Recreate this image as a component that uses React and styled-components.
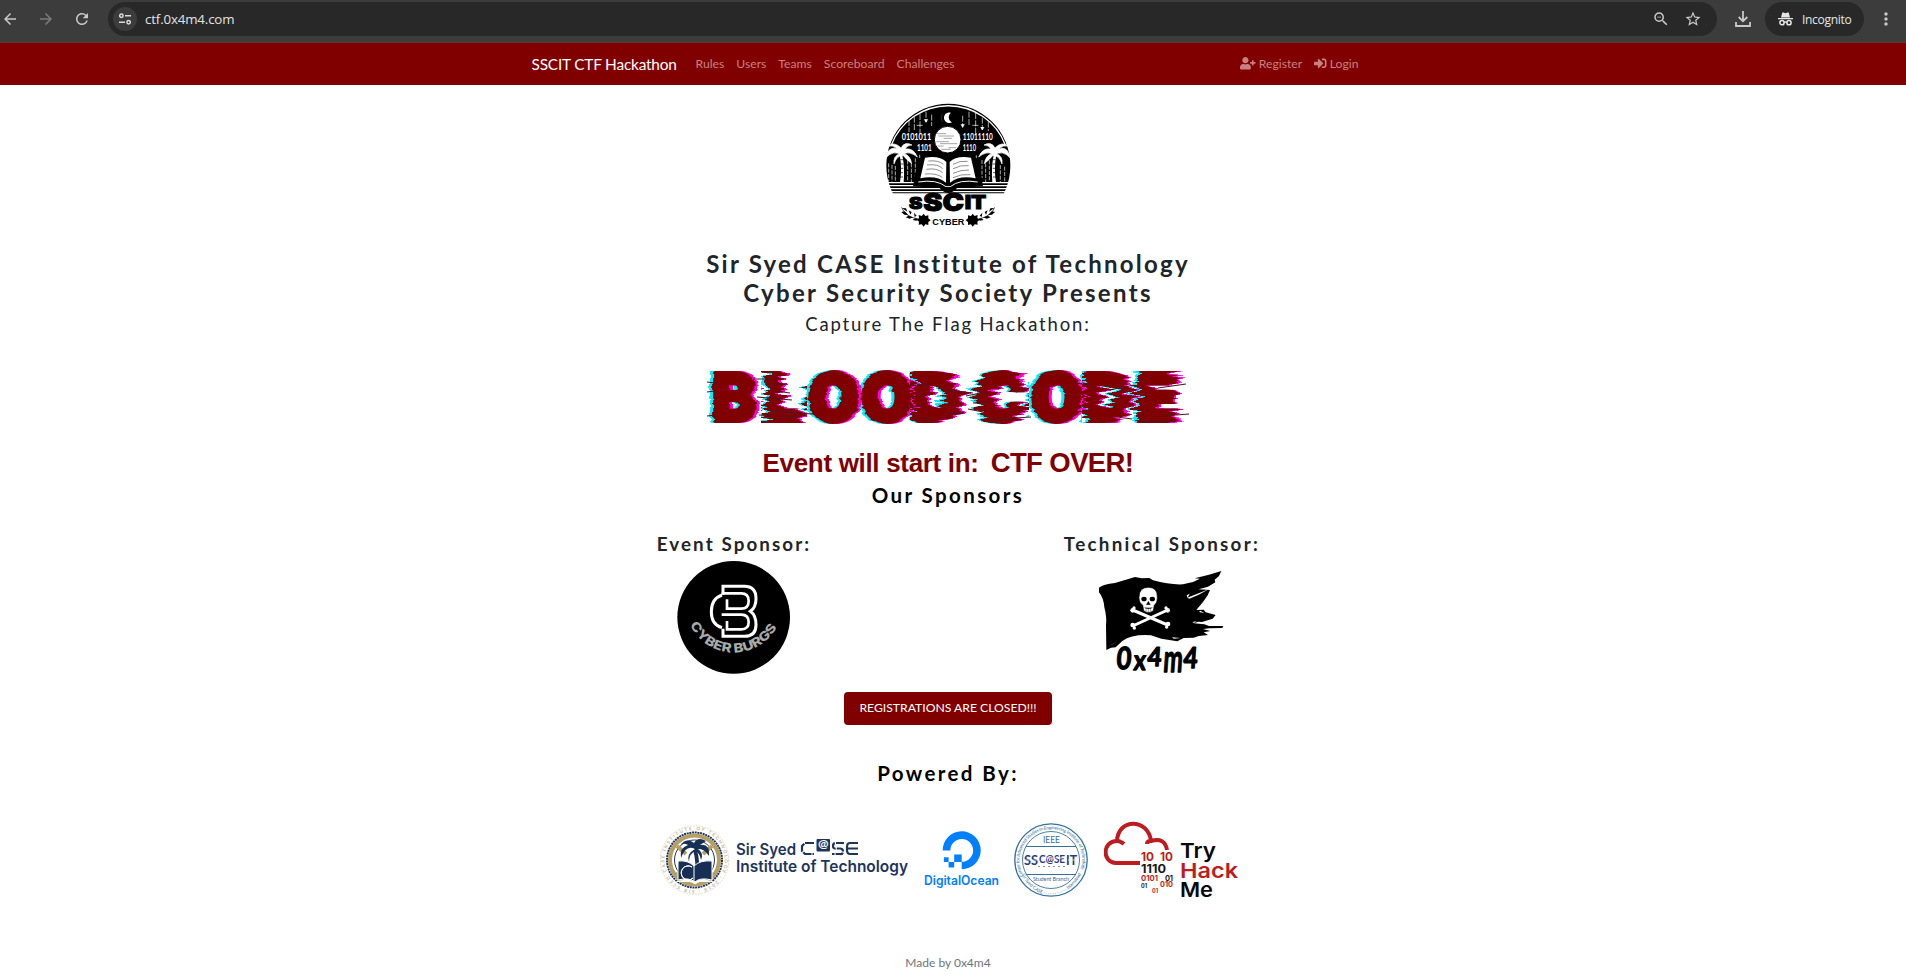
import React from 'react';
import styled, { createGlobalStyle } from 'styled-components';
import { FaUserPlus, FaSignInAlt } from 'react-icons/fa';
import { MdArrowBack, MdArrowForward, MdRefresh, MdStarBorder, MdMoreVert, MdZoomOut } from 'react-icons/md';

const GlobalStyle = createGlobalStyle`
  * { box-sizing: border-box; }
  body { margin: 0; background: #fff; font-family: Lato, "Liberation Sans", sans-serif; color: #212529; overflow: hidden; }
  svg { display: block; flex: none; }
`;

const Page = styled.div`
  height: 979px;
  display: flex;
  flex-direction: column;
`;

/* Browser toolbar */
const Toolbar = styled.div`
  height: 43px;
  flex: none;
  display: flex;
  align-items: flex-start;
  padding: 2px 10px 0 1px;
  background: #3c3c3c;
  border-bottom: 1px solid #62382f;
  color: #c9c9c9;
  font-family: "Open Sans", "Noto Sans", sans-serif;
`;
const ToolButton = styled.span`
  width: ${(p) => p.$w || 36}px;
  height: 34px;
  display: flex;
  align-items: center;
  justify-content: ${(p) => p.$align || 'flex-start'};
  padding-left: ${(p) => p.$pl || 0}px;
  color: ${(p) => (p.$dim ? '#7b7b7b' : '#c9c9c9')};
`;
const AddressBar = styled.div`
  flex: 1;
  height: 34px;
  border-radius: 17px;
  background: #282828;
  display: flex;
  align-items: center;
  padding: 0 15px 0 5px;
`;
const SiteInfo = styled.span`
  width: 24px;
  height: 24px;
  border-radius: 50%;
  background: #3c3c3c;
  display: flex;
  align-items: center;
  justify-content: center;
`;
const Url = styled.span`
  flex: 1;
  padding-left: 8px;
  font-size: 13.3px;
  line-height: 20px;
  color: #e3e3e3;
  letter-spacing: -0.15px;
`;
const AddressActions = styled.span`
  display: flex;
  gap: 14px;
`;
const Incognito = styled.div`
  width: 99px;
  height: 34px;
  border-radius: 17px;
  background: #282828;
  display: flex;
  align-items: center;
  padding-left: 13px;
  gap: 9px;
  font-size: 12px;
  letter-spacing: -0.3px;
  color: #e6e6e6;
`;

/* Site navigation */
const Navbar = styled.nav`
  height: 42px;
  flex: none;
  background: #800000;
  display: flex;
  justify-content: center;
`;
const NavInner = styled.div`
  width: 827px;
  margin-right: 16px;
  display: flex;
  align-items: center;
  padding-bottom: 1px;
`;
const Brand = styled.span`
  width: 164px;
  font-size: 15.4px;
  letter-spacing: -0.19px;
  white-space: nowrap;
  color: #fff;
`;
const NavGroup = styled.div`
  display: flex;
  gap: 12px;
  margin-left: ${(p) => (p.$end ? 'auto' : '0')};
`;
const NavLink = styled.span`
  display: flex;
  align-items: center;
  gap: 3px;
  font-size: 12.2px;
  line-height: 18px;
  color: #c98080;
`;
const UserPlusIcon = styled(FaUserPlus)`
  width: 15.5px;
  height: 12.5px;
`;

/* Main content */
const Main = styled.main`
  width: 1896px;
  display: flex;
  flex-direction: column;
  align-items: center;
  padding-top: 10px;
`;
const Heading = styled.h1`
  margin: ${(p) => p.$mt || 0}px 0 ${(p) => p.$mb || 0}px;
  font-family: Lato, sans-serif;
  font-size: ${(p) => p.$size}px;
  line-height: ${(p) => p.$lh}px;
  font-weight: ${(p) => p.$weight || 700};
  letter-spacing: ${(p) => p.$track}px;
  color: ${(p) => p.$color || '#212529'};
  white-space: nowrap;
`;
const Title = styled.div`
  margin-top: 25px;
`;
const Countdown = styled.div`
  display: flex;
  align-items: baseline;
  gap: 12px;
  margin-top: 9px;
  height: 37px;
  line-height: 37px;
  font-family: "Liberation Sans", Arial, sans-serif;
  font-weight: 700;
  font-size: 26px;
  letter-spacing: -0.32px;
  color: #800000;
`;
const CountdownValue = styled.span`
  font-size: 27.5px;
  letter-spacing: -0.6px;
`;
const Sponsors = styled.section`
  display: grid;
  grid-template-columns: 428px 428px;
  margin-top: 23px;
  height: 162px;
`;
const Sponsor = styled.div`
  display: flex;
  flex-direction: column;
  align-items: center;
`;
const ClosedButton = styled.button`
  width: 208px;
  height: 33px;
  flex: none;
  padding: 0 0 2px;
  border: 0;
  border-radius: 4px;
  background: #800000;
  color: #fff;
  font-family: Lato, sans-serif;
  font-size: 12.2px;
  white-space: nowrap;
`;
const Partners = styled.section`
  display: flex;
  gap: 16px;
  margin: 36px 0 0 2px;
  height: 80px;
`;
const Footer = styled.footer`
  margin-top: 53px;
  font-size: 12px;
  line-height: 18px;
  color: #6c757d;
`;

const TuneIcon = () => (
  <svg width="12" height="12" viewBox="0 0 12 12" fill="none" stroke="#dcdcdc" strokeWidth="1.5">
    <circle cx="2.4" cy="2.8" r="1.7" /><path d="M6 2.8h6M0 9.2h6" /><circle cx="9.6" cy="9.2" r="1.7" />
  </svg>
);
const DownloadIcon = () => (
  <svg width="16" height="16" viewBox="0 0 16 16" fill="none" stroke="#c9c9c9" strokeWidth="1.8">
    <path d="M8 0v10M3.7 6 8 10.3 12.3 6M1 11v4h14v-4" />
  </svg>
);
const IncognitoIcon = () => (
  <svg width="15" height="14" viewBox="0 0 15 14">
    <path d="M3 5.5 4.3.6h1.3l1.9.7L9.4.6h1.3L12 5.5zM0 6h15v1.3H0z" fill="#e6e6e6" />
    <g fill="none" stroke="#e6e6e6" strokeWidth="1.5"><circle cx="4" cy="10.7" r="2.1" /><circle cx="11" cy="10.7" r="2.1" /><path d="M6 10.4q1.5-.8 3 0" /></g>
  </svg>
);

const Palm = ({ flip }) => (
  <g transform={flip ? 'translate(474 0) scale(-1 1)' : undefined} fill="#fff">
    <path d="M92 180q8 40 1 82h11q4-42-4-82z" />
    <path d="M96 180Q74 164 51 188Q58 152 84 162Q72 149 55 153Q76 138 96 159Q107 138 129 150Q114 151 108 162Q134 158 145 186Q120 167 106 177Q124 181 128 206Q112 193 103 182Q84 180 75 207Q72 184 91 176Z" stroke="#fff" strokeWidth="2" />
    <path d="M94 194h9M94 207h9M94 220h9M93 233h9M93 246h9" stroke="#000" strokeWidth="2" />
  </g>
);
const SocietyLogo = () => (
  <svg width="156" height="140" viewBox="3 0 468 420">
    <defs><clipPath id="disc"><path d="M50 295V20h376v275z" /></clipPath></defs>
    <g clipPath="url(#disc)">
      <circle cx="238" cy="212" r="186" fill="#000" />
      <path d="M67 150A183 183 0 0 1 409 150" fill="none" stroke="#fff" strokeWidth="4" />
      <g stroke="#fff" strokeWidth="2" fill="none">
        <path d="M120 75v36M136 65v42M153 57v66M143 91h20M171 50v31M188 59v34M281 62v35M300 50v42M320 54v64M310 91h20M340 68v36M358 80v28" strokeDasharray="18 4" />
        <path d="M59 205v55M69 210v50M79 213v50M116 196v64M127 205v56M139 190v60M339 195v54M350 205v56M361 196v62M394 210v52M407 215v46M152 179v10M322 181v9" strokeDasharray="12 4" />
        <path d="m166 73 5 9 5-9M276 88l5 9 5-9M335 96l5 9 5-9" fill="#fff" />
      </g>
      <path d="M246 53a16 16 0 1 0 3 29a17 17 0 0 1-3-29" fill="#fff" />
      <path d="M220 56q-6 13 0 26" stroke="#777" fill="none" />
      <g fill="#fff" fontFamily="Lato, sans-serif" fontWeight="700" fontSize="28">
        <text x="98" y="136" textLength="89" lengthAdjust="spacingAndGlyphs">0101011</text>
        <text x="281" y="136" textLength="90" lengthAdjust="spacingAndGlyphs">11011110</text>
        <text x="144" y="168" textLength="44" lengthAdjust="spacingAndGlyphs">1101</text>
        <text x="281" y="168" textLength="40" lengthAdjust="spacingAndGlyphs">1110</text>
      </g>
      <circle cx="236" cy="134" r="40" fill="#fff" stroke="#000" strokeWidth="3" />
      <path d="M203 116h28M208 123h47M224 130h25M202 140h38M213 146h52M206 153h18M238 158h24M217 163h28" stroke="#777" strokeWidth="2" />
      <path d="M50 263h376M50 272h376M50 281h376M50 290h376" stroke="#fff" strokeWidth="4" />
      <Palm /><Palm flip />
      <path d="M147 190h15l8-8q45-6 67 14q23-20 68-14l8 8h14l15 84-84 5q-21 20-42 0l-84-5z" fill="#000" />
      <path d="M168 188q44-7 64 13l-1 62q-29-23-77-13zM306 188q-44-7-64 13l1 62q29-23 77-13z" fill="#fff" />
      <path d="M178 198q31-3 45 10M174 210q33-4 47 11M172 223q31-5 49 10M168 237q34-3 52 10M252 208q20-12 44-9M252 221q23-12 47-9M252 235q24-11 48-10M252 248q25-12 52-9" fill="none" stroke="#555" strokeWidth="2" />
      <path d="M148 261q55-9 83 14h13q27-23 82-14" stroke="#fff" strokeWidth="3" fill="none" />
      <path d="M210 277h56q-13 17-28 17t-28-17" fill="#000" />
    </g>
    <g fontFamily="Inter, sans-serif" fontWeight="900" fill="#000" stroke="#000" strokeWidth="3">
      <text x="120" y="342" fontSize="48" textLength="40" lengthAdjust="spacingAndGlyphs">S</text>
      <text x="163" y="348" fontSize="75" textLength="122" lengthAdjust="spacingAndGlyphs">SC</text>
      <text x="287" y="343" fontSize="57" textLength="65" lengthAdjust="spacingAndGlyphs">IT</text>
    </g>
    <text x="190" y="391" fontFamily="Liberation Sans" fontWeight="700" fontSize="28" textLength="96" lengthAdjust="spacingAndGlyphs">CYBER</text>
    {[false, true].map((f) => (
      <g key={String(f)} transform={f ? 'translate(475 0) scale(-1 1)' : undefined}>
        <path d="m164 356 5 7 9-2 0 9 7 6-7 5 0 9-9-2-5 7-6-7-9 1 1-9-6-5 6-6-1-9 9 3z" />
        <path d="M98 337q9 27 48 35" fill="none" stroke="#000" strokeWidth="2" />
        <path d="M99 339l12 1 4 10zM107 349l-10 2 9 8 12 1zM119 346l5 13 4-8zM119 362l-9 5 12 4 10-4zM135 353l2 13 6-4zM138 370l-7 5 11 2 8-5z" />
      </g>
    ))}
  </svg>
);

const TITLE_X = [14, 66, 110, 163, 214, 262, 277, 333, 385, 438];
const STREAKS = 'M55 18h24M67 23h22M78 30l14 2M59 36l35 3M74 50l40 3M61 54l40 2M210 25l22-2M250 29l25 3M212 36l15-2M205 48l20-5M250 53l16-2M218 58l18 1M268 35l19-4M275 42l15-1M270 48l15 3M289 59l44-3M318 31l13-4M378 22l14 2M412 29l24-5M380 51l10-2M419 56l15 2M460 27l28-4M465 55l26-2M440 61l36-1M9 21l8 1M9 31l8-1M9 55l9-1';
const TitleLayers = () => (
  <>
    <use href="#title" x="-3" fill="#00efff" stroke="#00efff" />
    <use href="#title" x="3" fill="#ff00dc" stroke="#ff00dc" />
    <use href="#title" fill="#800000" stroke="#800000" />
  </>
);
const Tear = ({ id, freq, scale, seed }) => (
  <filter id={id} x="-5%" y="-10%" width="110%" height="120%" colorInterpolationFilters="sRGB">
    <feTurbulence type="fractalNoise" baseFrequency={freq} numOctaves="2" seed={seed} result="n" />
    <feColorMatrix in="n" type="matrix" values="1 0 0 0 0  0 0 0 0 0.5  0 0 0 0 0.5  0 0 0 0 1" result="m" />
    <feDisplacementMap in="SourceGraphic" in2="m" scale={scale} xChannelSelector="R" yChannelSelector="G" />
  </filter>
);
const BloodCode = () => (
  <svg width="500" height="74" viewBox="0 0 500 74">
    <defs>
      <Tear id="tear" freq="0.025 0.26" scale="30" seed="5" />
      <Tear id="ripple" freq="0.03 0.25" scale="6" seed="3" />
      <clipPath id="tornLetters"><path d="M63 0h46v74H63zM212 0h119v74H212zM384 0h116v74H384z" /></clipPath>
      <clipPath id="calmLetters"><path d="M0 0h63v74H0zM109 0h103v74H109zM331 0h53v74h-53z" /></clipPath>
      <text id="title" x={TITLE_X.join(' ')} y="60" fontFamily="Inter, Lato, sans-serif" fontWeight="900" fontSize="66" strokeWidth="4" strokeLinejoin="round">BLOOD CODE</text>
    </defs>
    <g clipPath="url(#tornLetters)"><g filter="url(#tear)"><TitleLayers /></g></g>
    <g clipPath="url(#calmLetters)"><g filter="url(#ripple)"><TitleLayers /></g></g>
    <path d={STREAKS} stroke="#52151e" strokeWidth="1.1" />
  </svg>
);

const CyberBurgsLogo = () => (
  <svg width="114" height="114" viewBox="54 35 342 342">
    <defs><path id="burgsArc" d="M93 226A146 146 0 0 0 359 222" /></defs>
    <circle cx="224" cy="204" r="169" />
    <g fill="none" stroke="#fff" strokeWidth="9">
      <path d="M192 136V111H256Q291 111 291 148Q291 174 274 186Q291 198 291 226Q291 261 256 261H192V238" />
      <path d="M189 137Q157 148 157 187T189 235" />
      <path d="M204 150V178H247Q269 178 269 155T247 132H188M188 196H247Q269 196 269 218T247 240H204V215" strokeWidth="8" />
    </g>
    <text fill="#aaa" fontFamily="Inter, sans-serif" fontWeight="800" fontSize="38"><textPath href="#burgsArc" textLength="322" lengthAdjust="spacingAndGlyphs">CYBER BURGS</textPath></text>
  </svg>
);

const PirateLogo = () => (
  <svg width="160" height="125" viewBox="6 3 480 375">
    <path d="M57 83Q70 73 105 69L165 51L185 55L208 54L219 61Q269 75 309 73L339 66L360 56L344 55L387 44L424 33L417 48L404 59L406 67L384 80L356 88L390 90L383 106L369 126L357 140L349 150L371 149L377 157L407 165L398 176L366 186L354 185L342 190L373 193L387 198H430L427 204L389 205L369 207L391 213L371 217L384 225L356 228L341 233L311 234L292 244L244 236L213 226Q157 222 127 243L107 262L93 263L79 270L78 196Q81 172 73 142Q71 114 57 97Z" />
    <path d="M84 261l28-18-13 9zM320 106l9-5-6 12zM337 186l13-2-8 5M361 152l12 7-16-3M276 232l25 2-20 2M322 113l30-12 34-13-30 16-28 12z" fill="#fff" />
    <path d="m158 150 105 45M263 150 158 198" stroke="#fff" strokeWidth="9" />
    <g fill="#fff"><circle cx="158" cy="151" r="7" /><circle cx="162" cy="144" r="5" /><circle cx="263" cy="151" r="7" /><circle cx="258" cy="144" r="5" /><circle cx="158" cy="195" r="7" /><circle cx="163" cy="204" r="5" /><circle cx="264" cy="192" r="7" /><circle cx="260" cy="201" r="5" />
      <path d="M177 112Q177 82 205 82T232 112Q232 130 223 135L220 152Q205 163 191 152L188 135Q177 130 177 112" stroke="#000" strokeWidth="2" /></g>
    <ellipse cx="192" cy="117" rx="8" ry="7" /><ellipse cx="217" cy="117" rx="8" ry="7" /><path d="m205 124-6 10h12zM193 143q12 6 25 0M198 143v11M205 144v12M212 144v10" stroke="#000" />
    <g fontFamily="Lato, sans-serif" fontWeight="700" fill="#000" stroke="#000" strokeWidth="4" strokeLinejoin="round">
      <text transform="translate(108 326) skewX(-4)" fontSize="92" textLength="44" lengthAdjust="spacingAndGlyphs">0</text>
      <text transform="translate(160 329) skewX(-4)" fontSize="84" textLength="36" lengthAdjust="spacingAndGlyphs">x</text>
      <text transform="translate(201 318) skewX(-4)" fontSize="78" textLength="42" lengthAdjust="spacingAndGlyphs">4</text>
      <text transform="translate(248 336) skewX(-4)" fontSize="114" textLength="58" lengthAdjust="spacingAndGlyphs">m</text>
      <text transform="translate(309 324) skewX(-4)" fontSize="86" textLength="42" lengthAdjust="spacingAndGlyphs">4</text>
    </g>
  </svg>
);

const InstituteLogo = () => (
  <svg width="248" height="80" viewBox="0 0 248 80">
    <defs><path id="sealRing" d="M34.5 69a30 30 0 1 1 .1 0" /></defs>
    <circle cx="34.5" cy="39" r="34.2" fill="#fff" stroke="#d8ceb1" strokeWidth=".7" strokeDasharray="2 1" />
    <text fontFamily="Lato" fontWeight="700" fontSize="4.6" fill="#c2b58f"><textPath href="#sealRing" textLength="184">SIR SYED CASE INSTITUTE OF TECHNOLOGY · 2018 ·</textPath></text>
    <circle cx="34.5" cy="39" r="27.5" fill="#fff" stroke="#1f355b" strokeWidth="2" strokeDasharray="2 .7" />
    <circle cx="34.5" cy="39" r="24.5" fill="#fff" stroke="#b59f65" strokeWidth="4" />
    <circle cx="34.5" cy="39" r="20" fill="none" stroke="#1f355b" strokeWidth="1" />
    <path d="M17 25l9 8M52 25l-9 8M15 55l7-5M54 55l-7-5" stroke="#b59f65" strokeWidth="4" />
    <path d="M33 29q4 13 1 24h5q1-13-2-24z" fill="#172f55" />
    <path d="M35 28Q26 23 21 37Q19 27 28 24Q23 21 20 25Q26 16 34 22Q38 15 46 20L40 24Q50 22 49 35Q44 27 38 28Q44 32 41 39Q40 33 36 30Q29 32 29 41Q26 33 35 28" fill="#172f55" />
    <path d="M18 40q10-1 16 5 6-6 18-5v19q-12-3-17 2-6-5-17-2z" fill="#172f55" stroke="#fff" />
    <path d="M32 46a7 7 0 1 0 1 11 7 7 0 1 1-1-11M34 45v16M16 61q12-4 19 2 7-6 18-2" fill="#fff" stroke="#fff" />
    <g fill="#1d355b" fontFamily="Inter, sans-serif" fontWeight="600" fontSize="16">
      <text x="76" y="34" textLength="60" lengthAdjust="spacingAndGlyphs">Sir Syed</text>
      <text x="76" y="51" textLength="172" lengthAdjust="spacingAndGlyphs">Institute of Technology</text>
    </g>
    <g fill="none" stroke="#1d355b" strokeWidth="2.2">
      <path d="M154 22h-9l-3 3v5l3 3h9" strokeDasharray="9 1" />
      <path d="M184 22h-8q-3 0-3 3t3 2.500h4q3 0 3 3t-3 2.500h-8" strokeDasharray="8 1" />
      <path d="M198 22h-8q-3 0-3 4v3q0 4 3 4h8M188 27.500h10" />
    </g>
    <rect x="156.500" y="18" width="13.500" height="12.500" rx="1" fill="#1d355b" />
    <text x="158" y="27" fontFamily="Lato" fontWeight="700" fontSize="11.500" textLength="10.500" lengthAdjust="spacingAndGlyphs" fill="#fff">@</text>
  </svg>
);

const DigitalOceanLogo = () => (
  <svg width="75" height="80" viewBox="0 0 75 80" fill="#0080ff">
    <path d="M37.700 48.300v-7.500A11.400 11.400 0 1 0 26.300 29.600h-7.600A19 19 0 1 1 37.700 48.300" />
    <path d="M30.200 33.400h7.500v7.500h-7.500zM24.600 40.900h5.600v5.600h-5.600zM19.900 36.200h4.700v4.700h-4.700z" />
    <text x="0" y="63.800" fontFamily="Inter, sans-serif" fontWeight="600" fontSize="12.700" textLength="75" lengthAdjust="spacingAndGlyphs">DigitalOcean</text>
  </svg>
);

const SealFrame = styled.svg`
  margin-left: -1px;
`;
const BranchLogo = () => (
  <SealFrame width="74" height="80" viewBox="0 0 74 80" fill="none" stroke="#33709f">
    <defs><path id="branchTop" d="M9.500 55A31.500 31.500 0 1 1 64.500 55" /><path id="branchLow" d="M6 51Q18 74 37 74T69 50" /></defs>
    <circle cx="37" cy="39" r="36.200" strokeWidth="1.300" />
    <circle cx="37" cy="39" r="28.500" strokeWidth=".900" />
    <path d="M12 25.500h50M12 53.500h50" />
    <g stroke="none" fill="#33709f" fontFamily="Lato, sans-serif">
      <text fontSize="4.600"><textPath href="#branchTop" textLength="124">Center for Advanced Studies in Engineering Institute of Technology</textPath></text>
      <text fontSize="4.600"><textPath href="#branchLow" startOffset="3" textLength="76">Sir Syed CASE · · · · · · · · · · · Islamabad</textPath></text>
      <text x="29" y="22" fontSize="10" textLength="17" lengthAdjust="spacingAndGlyphs">IEEE</text>
      <text x="19" y="60" fontSize="5.500" textLength="36">Student Branch</text>
      <g fill="#263a79" fontWeight="700" fontSize="13">
        <text x="10" y="43.500" textLength="14" lengthAdjust="spacingAndGlyphs">SS</text>
        <text x="25" y="42" fontSize="11" textLength="26" lengthAdjust="spacingAndGlyphs">C@SE</text>
        <text x="52" y="43.500" textLength="11" lengthAdjust="spacingAndGlyphs">IT</text>
      </g>
    </g>
    <path d="M10 39h14M28 37h24M54 39h8" stroke="#fff" strokeWidth=".700" />
    <path d="M24 45.500h27" stroke="#555b91" strokeWidth=".700" strokeDasharray="2 3" />
  </SealFrame>
);

const TryHackMeLogo = () => (
  <svg width="134" height="80" viewBox="0 0 134 80">
    <path d="M36 42H12C-2 42-2 20 13 20C14-3 44-3 47 20Q61 16 63 29M13 20q3-.5 7 3M47 20q-4 0-4 3" fill="none" stroke="#bd1d20" strokeWidth="4" strokeLinejoin="round" />
    <g fontFamily="Inter, sans-serif" fontWeight="700" fill="#bd1d20" fontSize="12">
      <text x="37" y="40.300" textLength="13" lengthAdjust="spacingAndGlyphs">10</text><text x="56" y="40.300" textLength="13" lengthAdjust="spacingAndGlyphs">10</text>
      <text x="37" y="52" fill="#171717" textLength="25" lengthAdjust="spacingAndGlyphs">1110</text>
      <text x="37" y="60" fontSize="7.500" textLength="17" lengthAdjust="spacingAndGlyphs">0101</text>
      <text x="61" y="60" fontSize="7.500" fill="#171717" textLength="8">01</text>
      <text x="56" y="66" fontSize="7.500" textLength="13" lengthAdjust="spacingAndGlyphs">010</text>
      <text x="37" y="67" fontSize="5.500" fill="#171717">01</text><text x="48" y="72" fontSize="5.500">01</text>
    </g>
    <g fontFamily="Inter, sans-serif" fontWeight="600" fontSize="20.500" fill="#080808">
      <text x="76" y="37" textLength="36" lengthAdjust="spacingAndGlyphs">Try</text>
      <text x="76" y="56.500" fill="#bd1d20" textLength="58" lengthAdjust="spacingAndGlyphs">Hack</text>
      <text x="76" y="76" textLength="33" lengthAdjust="spacingAndGlyphs">Me</text>
    </g>
  </svg>
);

export default function App() {
  return (
    <Page>
      <GlobalStyle />
      <Toolbar>
        <ToolButton><MdArrowBack size={18} /></ToolButton>
        <ToolButton $dim><MdArrowForward size={18} /></ToolButton>
        <ToolButton $w={35}><MdRefresh size={18} /></ToolButton>
        <AddressBar>
          <SiteInfo><TuneIcon /></SiteInfo>
          <Url>ctf.0x4m4.com</Url>
          <AddressActions><MdZoomOut size={18} /><MdStarBorder size={18} /></AddressActions>
        </AddressBar>
        <ToolButton $w={48} $align="center" $pl={4}><DownloadIcon /></ToolButton>
        <Incognito><IncognitoIcon />Incognito</Incognito>
        <ToolButton $w={32} $align="flex-end"><MdMoreVert size={20} /></ToolButton>
      </Toolbar>
      <Navbar>
        <NavInner>
          <Brand>SSCIT CTF Hackathon</Brand>
          <NavGroup>
            {['Rules', 'Users', 'Teams', 'Scoreboard', 'Challenges'].map((t) => <NavLink key={t}>{t}</NavLink>)}
          </NavGroup>
          <NavGroup $end>
            <NavLink><UserPlusIcon />Register</NavLink>
            <NavLink><FaSignInAlt size={12.5} />Login</NavLink>
          </NavGroup>
        </NavInner>
      </Navbar>
      <Main>
        <SocietyLogo />
        <Heading $mt={14} $size={24} $lh={29} $track={2.25}>Sir Syed CASE Institute of Technology</Heading>
        <Heading $size={24} $lh={29} $track={2.3}>Cyber Security Society Presents</Heading>
        <Heading $mt={5} $size={18.5} $lh={24} $track={1.85} $weight={400}>Capture The Flag Hackathon:</Heading>
        <Title><BloodCode /></Title>
        <Countdown><span>Event will start in:</span><CountdownValue>CTF OVER!</CountdownValue></Countdown>
        <Heading $mt={2} $size={20.5} $lh={24} $track={2.4} $color="#000">Our Sponsors</Heading>
        <Sponsors>
          <Sponsor>
            <Heading as="h2" $mt={2} $mb={5} $size={18.8} $lh={24} $track={2.1}>Event Sponsor:</Heading>
            <CyberBurgsLogo />
          </Sponsor>
          <Sponsor>
            <Heading as="h2" $mt={2} $mb={5} $size={18.8} $lh={24} $track={2.3}>Technical Sponsor:</Heading>
            <PirateLogo />
          </Sponsor>
        </Sponsors>
        <ClosedButton>REGISTRATIONS ARE CLOSED!!!</ClosedButton>
        <Heading $mt={36} $size={20.5} $lh={24} $track={2.4} $color="#000">Powered By:</Heading>
        <Partners>
          <InstituteLogo /><DigitalOceanLogo /><BranchLogo /><TryHackMeLogo />
        </Partners>
        <Footer>Made by 0x4m4</Footer>
      </Main>
    </Page>
  );
}
